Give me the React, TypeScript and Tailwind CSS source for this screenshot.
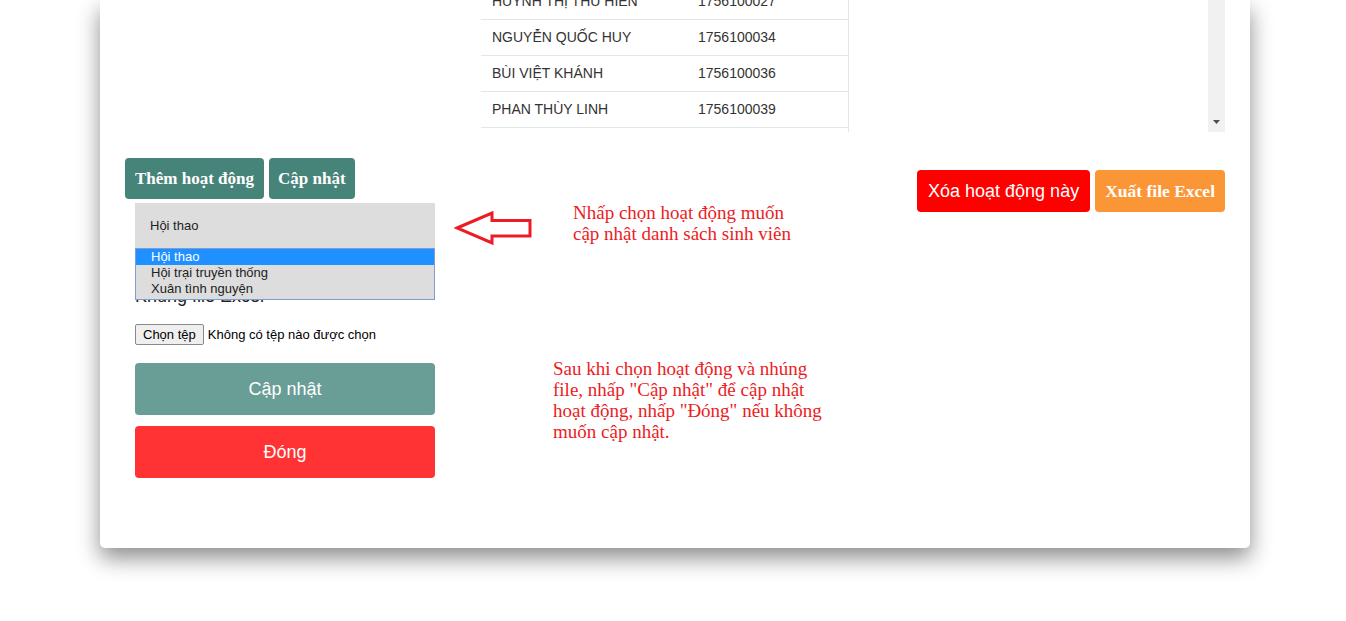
import React from 'react'

const students = [
  { name: 'HUỲNH THỊ THU HIỀN', id: '1756100027' },
  { name: 'NGUYỄN QUỐC HUY', id: '1756100034' },
  { name: 'BÙI VIỆT KHÁNH', id: '1756100036' },
  { name: 'PHAN THÙY LINH', id: '1756100039' },
  { name: 'TRẦN THỊ MỸ', id: '1756100041' },
]

const activities = ['Hội thao', 'Hội trại truyền thống', 'Xuân tình nguyện']

function StudentTable() {
  return (
    <div className="flex h-[132px] overflow-hidden">
      <div className="flex flex-1 justify-center pr-[3px]">
        <div className="-mt-[16px] w-[368px] border-r border-[#dde9e6]">
          {students.map((s) => (
            <div
              key={s.id}
              className="flex h-[36px] items-center border-b border-[#dde9e6] text-[14px] text-[#333]"
            >
              <div className="w-[206px] pl-[11px]">{s.name}</div>
              <div className="pl-[11px]">{s.id}</div>
            </div>
          ))}
        </div>
      </div>
      {/* fake scrollbar */}
      <div className="flex w-[17px] flex-col justify-end bg-[#f1f1f1] pb-[7px]">
        <svg width="17" height="5" viewBox="0 0 17 5">
          <polygon points="5,0 12,0 8.5,4" fill="#505050" />
        </svg>
      </div>
    </div>
  )
}

function Arrow() {
  return (
    <svg width="80" height="36" viewBox="0 0 80 36" className="block">
      <polygon
        points="3,17 38,2 38,9.5 76,9.5 76,25 38,25 38,32"
        fill="none"
        stroke="#ed1c24"
        strokeWidth="3"
        strokeLinejoin="miter"
      />
    </svg>
  )
}

export default function App() {
  return (
    <div className="min-h-[621px] bg-white font-['Liberation_Sans',Arial,sans-serif]">
      <div className="relative mx-[100px] w-[1150px] rounded-b-[5px] bg-white px-[25px] pb-[70px] shadow-[0_10px_22px_rgba(0,0,0,0.45)]">
        <StudentTable />

        {/* action buttons */}
        <div className="mt-[26px] flex h-[41px] items-start justify-between">
          <div className="flex gap-[5px]">
            <button className="h-[41px] rounded-[4px] bg-[#46847a] px-[10px] font-['Liberation_Serif',serif] text-[17px] font-bold text-white">
              Thêm hoạt động
            </button>
            <button className="h-[41px] rounded-[4px] bg-[#46847a] px-[9px] font-['Liberation_Serif',serif] text-[17px] font-bold text-white">
              Cập nhật
            </button>
          </div>
          <div className="mt-[12px] flex gap-[5px]">
            <button className="h-[42px] rounded-[4px] bg-[#ff0000] px-[11px] text-[18px] text-white">
              Xóa hoạt động này
            </button>
            <button className="h-[42px] rounded-[4px] bg-[#fb9637] px-[10px] font-['Liberation_Serif',serif] text-[17.5px] font-bold text-white">
              Xuất file Excel
            </button>
          </div>
        </div>

        {/* update form */}
        <div className="relative ml-[10px] mt-[4px] w-[300px]">
          <div className="flex h-[45px] items-center bg-[#dddddd] pl-[15px] text-[13px] text-[#222]">
            Hội thao
          </div>

          {/* open dropdown list */}
          <div className="absolute left-0 top-[45px] z-10 w-[300px] border border-[#7f9dd0] bg-[#dddddd] pb-[2px]">
            {activities.map((a, i) => (
              <div
                key={a}
                className={
                  i === 0
                    ? 'flex h-[16px] items-center bg-[#1e90ff] pl-[15px] text-[13px] text-white'
                    : 'flex h-[16px] items-center pl-[15px] text-[13px] text-[#222]'
                }
              >
                {a}
              </div>
            ))}
          </div>

          <div className="mt-[38px] text-[18px] leading-[21px] text-[#222]">Khung file Excel</div>

          <div className="mt-[17px] flex items-center gap-[4px] text-[13px]">
            <span className="flex h-[21px] items-center rounded-[2px] border border-[#8a8a8a] bg-[#efefef] px-[7px] text-black">
              Chọn tệp
            </span>
            <span className="text-black">Không có tệp nào được chọn</span>
          </div>

          <button className="mt-[18px] flex h-[52px] w-[300px] items-center justify-center rounded-[4px] bg-[#699e97] text-[18px] text-white">
            Cập nhật
          </button>
          <button className="mt-[11px] flex h-[52px] w-[300px] items-center justify-center rounded-[4px] bg-[#ff3333] text-[18px] text-white">
            Đóng
          </button>
        </div>

        {/* annotations */}
        <div className="absolute left-[354px] top-[211px]">
          <Arrow />
        </div>
        <div className="absolute left-[473px] top-[202px] font-['Liberation_Serif',serif] text-[19px] leading-[21px] text-[#ec1c24]">
          Nhấp chọn hoạt động muốn
          <br />
          cập nhật danh sách sinh viên
        </div>
        <div className="absolute left-[453px] top-[358px] font-['Liberation_Serif',serif] text-[19px] leading-[21px] text-[#ec1c24]">
          Sau khi chọn hoạt động và nhúng
          <br />
          file, nhấp "Cập nhật" để cập nhật
          <br />
          hoạt động, nhấp "Đóng" nếu không
          <br />
          muốn cập nhật.
        </div>
      </div>
    </div>
  )
}
